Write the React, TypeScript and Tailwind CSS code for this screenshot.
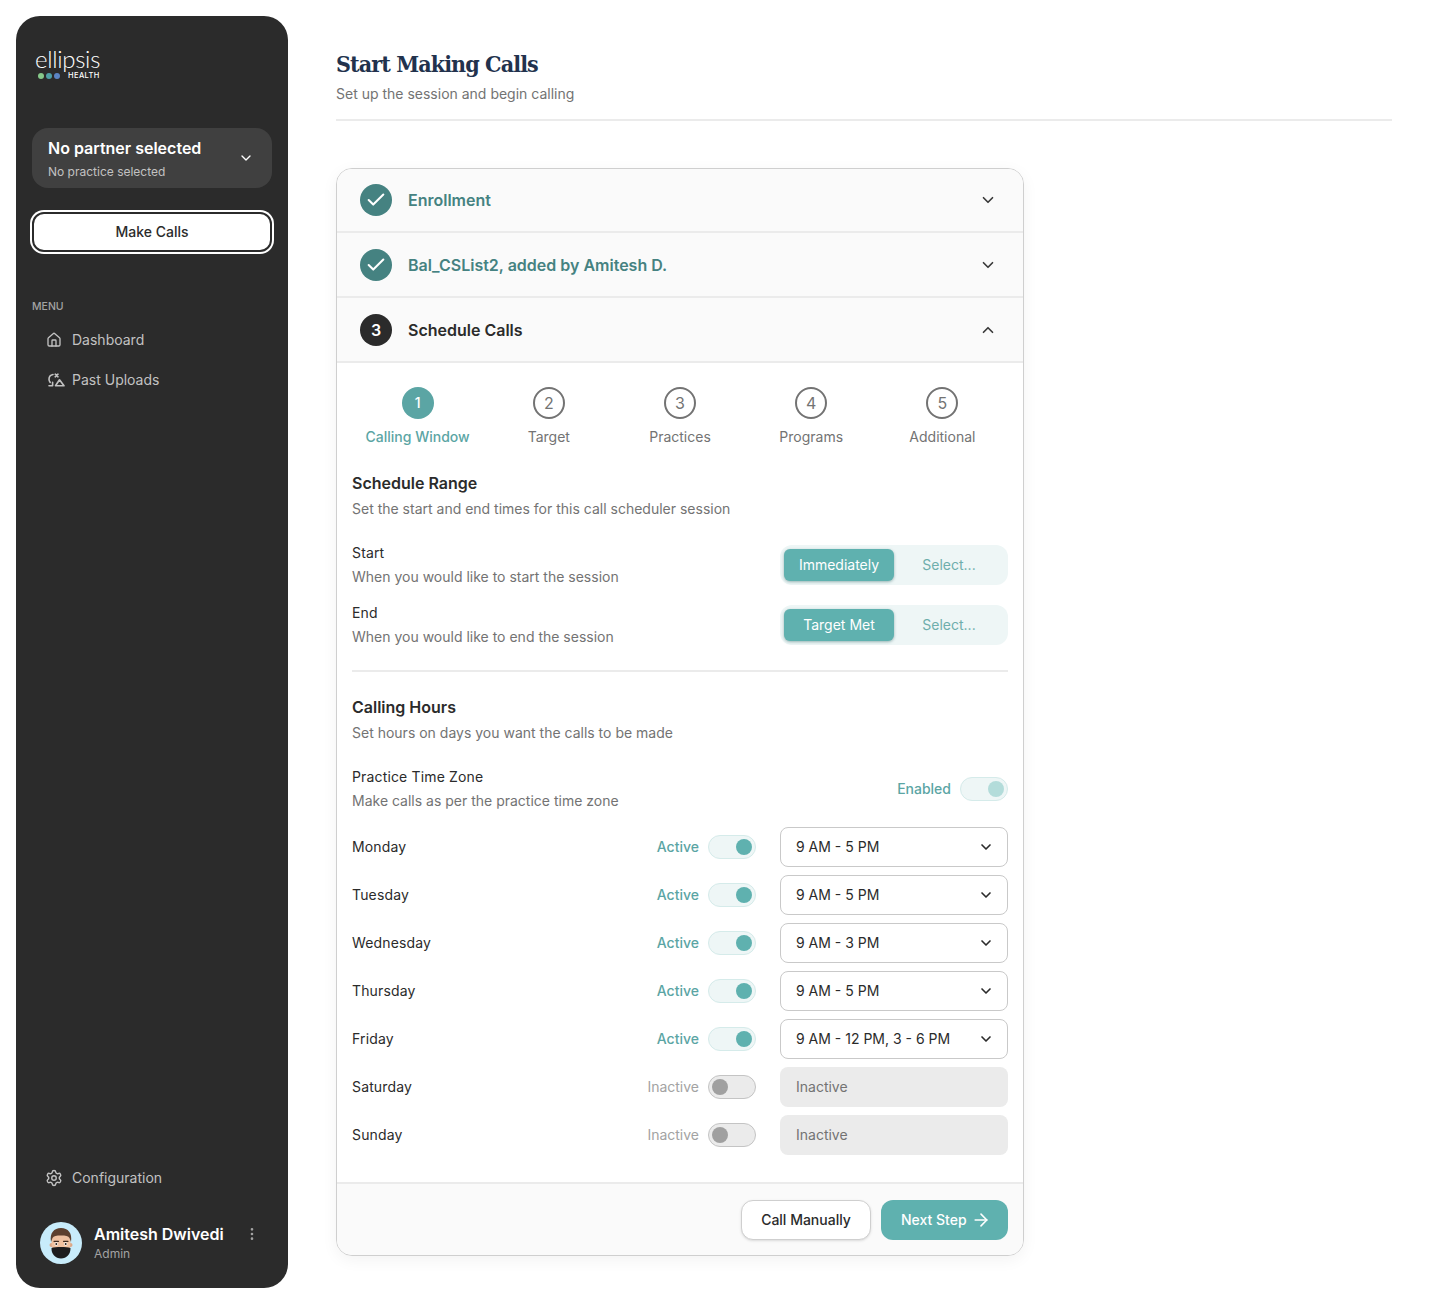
import { ArrowRight, Check, ChevronDown, ChevronUp, EllipsisVertical, Home, Settings } from "lucide-react";

const steps = ["Calling Window", "Target", "Practices", "Programs", "Additional"];

const days = [
  { day: "Monday", hours: "9 AM - 5 PM", active: true },
  { day: "Tuesday", hours: "9 AM - 5 PM", active: true },
  { day: "Wednesday", hours: "9 AM - 3 PM", active: true },
  { day: "Thursday", hours: "9 AM - 5 PM", active: true },
  { day: "Friday", hours: "9 AM - 12 PM, 3 - 6 PM", active: true },
  { day: "Saturday", hours: "Inactive", active: false },
  { day: "Sunday", hours: "Inactive", active: false },
];

function PastUploadsIcon() {
  return (
    <svg className="ml-[2px]" width="17" height="14" viewBox="0 0 17 14" fill="none" stroke="currentColor" strokeWidth="1.6" strokeLinecap="round" strokeLinejoin="round">
      <path d="M5 1.5C2.500 2 1 3.800 1 6.200c0 1.200.4 2.300 1.200 3.200" />
      <path d="M1 12.800h3.600V9.200" />
      <path d="M7.200 1.200l2.800 2.600M10 1.200L7.200 3.800" />
      <path d="M7.500 12.800l4-6 4.500 6z" />
    </svg>
  );
}

function Avatar() {
  return (
    <svg width="42" height="42" viewBox="0 0 42 42">
      <circle cx="21" cy="21" r="21" fill="#c8ecfb" />
      <circle cx="11.500" cy="23" r="2" fill="#dca888" />
      <circle cx="30.500" cy="23" r="2" fill="#dca888" />
      <ellipse cx="21" cy="21" rx="9.500" ry="13" fill="#eec0a0" />
      <path d="M11 20c-1.500-9 3-14 10-14s11.500 5 10 14l-1.500-4c-1-2-4-2.500-8.500-2.500s-7.500.5-8.500 2.500z" fill="#5c3f2e" />
      <path d="M14 19.300h4.500M23.500 19.300H28" stroke="#3d2a1f" strokeWidth="1.200" strokeLinecap="round" />
      <circle cx="16.300" cy="22" r="1.700" fill="#fff" />
      <circle cx="25.700" cy="22" r="1.700" fill="#fff" />
      <circle cx="16.300" cy="22" r="1" fill="#2a1c14" />
      <circle cx="25.700" cy="22" r="1" fill="#2a1c14" />
      <path d="M11.500 26c4-1.300 15-1.300 19 0 .3 6-4 10.500-9.500 10.500S11.200 32 11.500 26z" fill="#1c1c1e" />
    </svg>
  );
}

function Toggle({ on, soft }: { on: boolean; soft?: boolean }) {
  return (
    <div
      className={`flex h-6 w-12 items-center rounded-full border px-[3px] ${
        on ? "justify-end border-[#d5ebea] bg-[#eef6f6]" : "justify-start border-[#c4c4c4] bg-[#ebebeb]"
      }`}
    >
      <div className={`h-4 w-4 rounded-full ${on ? (soft ? "bg-[#b3dcda]" : "bg-[#5fb1af]") : "bg-[#a0a0a0]"}`} />
    </div>
  );
}

function Segmented({ value }: { value: string }) {
  return (
    <div className="flex h-10 w-[228px] items-center rounded-xl bg-[#eef6f6] pl-1">
      <div className="flex h-8 w-[110px] items-center justify-center rounded-md bg-[#5fb1af] text-sm text-white shadow-[0_1px_3px_rgba(40,100,100,0.45)]">
        {value}
      </div>
      <div className="flex-1 pr-1 text-center text-sm text-[#6eaeac]">Select...</div>
    </div>
  );
}

function AccordionRow({ title, done, open, first }: { title: string; done?: boolean; open?: boolean; first?: boolean }) {
  return (
    <div className={`flex items-center border-b-2 border-[#ebebeb] bg-[#fafafa] pl-[23px] pr-[26px] ${first ? "h-[64px]" : "h-[65px]"}`}>
      <div className={`flex h-8 w-8 items-center justify-center rounded-full text-white ${done ? "bg-[#458281]" : "bg-[#2b2b2b]"}`}>
        {done ? <Check size={22} strokeWidth={2.25} /> : <span className="text-base font-semibold">3</span>}
      </div>
      <div className={`ml-4 flex-1 text-base font-semibold ${done ? "text-[#458281]" : "text-[#2b2b2b]"}`}>{title}</div>
      {open ? <ChevronUp size={18} strokeWidth={2.25} className="text-[#3a3a3a]" /> : <ChevronDown size={18} strokeWidth={2.25} className="text-[#3a3a3a]" />}
    </div>
  );
}

function NavItem({ icon, label }: { icon: React.ReactNode; label: string }) {
  return (
    <div className="flex h-10 items-center pl-[14px] text-sm text-[#c2c2c2]">
      <div className="flex w-[26px] items-center">{icon}</div>
      {label}
    </div>
  );
}

export default function App() {
  return (
    <div className="flex h-[1304px] w-[1440px] bg-white p-4 font-['Inter',sans-serif]">
      <aside className="flex h-[1272px] w-[272px] shrink-0 flex-col rounded-3xl bg-[#2b2b2b] px-4">
        <div className="ml-[3px] mt-[33px] h-[31px] w-[70px]">
          <div className="font-['Lato',sans-serif] text-[24px] font-light leading-[20px] tracking-[-0.3px] text-white">ellipsis</div>
          <div className="mt-[3px] flex h-[8px] items-center">
            <span className="ml-[3px] h-[6px] w-[6px] rounded-full bg-[#86c98a]" />
            <span className="ml-[2px] h-[6px] w-[6px] rounded-full bg-[#4fa0a5]" />
            <span className="ml-[2px] h-[6px] w-[6px] rounded-full bg-[#5b84c4]" />
            <span className="ml-[8px] text-[7.500px] font-medium leading-[8px] tracking-[0.4px] text-white">HEALTH</span>
          </div>
        </div>
        <div className="mt-[48px] flex h-[60px] items-center justify-between rounded-2xl bg-[#404040] pl-4 pr-[18px]">
          <div className="pt-[2px]">
            <div className="text-base font-semibold leading-6 text-white">No partner selected</div>
            <div className="mt-[2px] text-xs leading-5 text-[#c2c2c2]">No practice selected</div>
          </div>
          <ChevronDown size={16} className="text-white" />
        </div>
        <button className="mt-6 h-10 rounded-xl border-2 border-[#2b2b2b] bg-white text-sm font-medium text-[#2b2b2b] ring-2 ring-white">
          Make Calls
        </button>
        <div className="mt-[47px] text-[10.500px] font-medium leading-4 text-[#a3a3a3]">MENU</div>
        <div className="mt-[5px]">
          <NavItem icon={<Home size={16} strokeWidth={2} />} label="Dashboard" />
          <NavItem icon={<PastUploadsIcon />} label="Past Uploads" />
        </div>
        <div className="mt-auto">
          <NavItem icon={<Settings size={18} strokeWidth={1.9} className="-ml-[1px]" />} label="Configuration" />
        </div>
        <div className="mb-6 mt-6 flex h-[42px] items-start pl-2">
          <Avatar />
          <div className="ml-3 flex-1">
            <div className="text-base font-semibold leading-6 text-white">Amitesh Dwivedi</div>
            <div className="text-xs leading-4 text-[#a3a3a3]">Admin</div>
          </div>
          <EllipsisVertical size={16} className="mr-3 mt-1 text-[#a3a3a3]" />
        </div>
      </aside>

      <main className="ml-12 w-[1056px]">
        <div className="border-b-2 border-[#ebebeb] pb-[15px] pt-[30px]">
          <h1 className="font-['DejaVu_Serif_Condensed','DejaVu_Serif',serif] text-[23px] font-bold leading-9 tracking-[-0.9px] text-[#22324d]">Start Making Calls</h1>
          <p className="mt-[2px] text-sm leading-5 text-[#737373]">Set up the session and begin calling</p>
        </div>

        <div className="mt-[47px] w-[688px] overflow-hidden rounded-2xl border border-[#cfcfcf] bg-white shadow-[0_4px_16px_rgba(0,0,0,0.05)]">
          <AccordionRow title="Enrollment" done first />
          <AccordionRow title="Bal_CSList2, added by Amitesh D." done />
          <AccordionRow title="Schedule Calls" open />

          <div className="px-[15px] pb-[27px]">
            <div className="mt-6 grid grid-cols-5">
              {steps.map((s, i) => (
                <div key={s} className="flex flex-col items-center">
                  <div
                    className={`flex h-8 w-8 items-center justify-center rounded-full text-base ${
                      i === 0 ? "bg-[#5ba5a4] text-sm font-medium text-white" : "border-2 border-[#737373] text-[#737373]"
                    }`}
                  >
                    {i + 1}
                  </div>
                  <div className={`mt-2 text-sm leading-5 ${i === 0 ? "font-medium text-[#5ba5a4]" : "text-[#737373]"}`}>{s}</div>
                </div>
              ))}
            </div>

            <h2 className="mt-6 text-base font-semibold leading-6 text-[#2b2b2b]">Schedule Range</h2>
            <p className="mt-[4px] text-sm leading-5 text-[#737373]">Set the start and end times for this call scheduler session</p>

            <div className="mt-6 flex items-center justify-between">
              <div>
                <div className="text-sm leading-5 tracking-[0.15px] text-[#2b2b2b]">Start</div>
                <div className="mt-1 text-sm leading-5 text-[#737373]">When you would like to start the session</div>
              </div>
              <Segmented value="Immediately" />
            </div>
            <div className="mt-4 flex items-center justify-between">
              <div>
                <div className="text-sm leading-5 tracking-[0.15px] text-[#2b2b2b]">End</div>
                <div className="mt-1 text-sm leading-5 text-[#737373]">When you would like to end the session</div>
              </div>
              <Segmented value="Target Met" />
            </div>

            <div className="mt-[23px] h-[2px] bg-[#ebebeb]" />

            <h2 className="mt-[23px] text-base font-semibold leading-6 text-[#2b2b2b]">Calling Hours</h2>
            <p className="mt-[4px] text-sm leading-5 text-[#737373]">Set hours on days you want the calls to be made</p>

            <div className="mt-6 flex items-center justify-between">
              <div>
                <div className="text-sm leading-5 tracking-[0.15px] text-[#2b2b2b]">Practice Time Zone</div>
                <div className="mt-1 text-sm leading-5 text-[#737373]">Make calls as per the practice time zone</div>
              </div>
              <div className="flex items-center gap-[9px]">
                <span className="text-sm font-medium text-[#5ba5a4]">Enabled</span>
                <Toggle on soft />
              </div>
            </div>

            <div className="mt-4 flex flex-col gap-2">
              {days.map((d) => (
                <div key={d.day} className="flex h-10 items-center">
                  <div className="flex-1 text-sm tracking-[0.15px] text-[#2b2b2b]">{d.day}</div>
                  <div className="mr-6 flex items-center gap-[9px]">
                    <span className={`text-sm ${d.active ? "font-medium text-[#5ba5a4]" : "text-[#a3a3a3]"}`}>{d.active ? "Active" : "Inactive"}</span>
                    <Toggle on={d.active} />
                  </div>
                  {d.active ? (
                    <div className="flex h-10 w-[228px] items-center justify-between rounded-lg border border-[#c9c9c9] bg-white pl-[15px] pr-[13px] text-sm text-[#2b2b2b]">
                      {d.hours}
                      <ChevronDown size={16} strokeWidth={2.5} className="text-[#2b2b2b]" />
                    </div>
                  ) : (
                    <div className="flex h-10 w-[228px] items-center rounded-lg bg-[#ebebeb] pl-4 text-sm text-[#737373]">{d.hours}</div>
                  )}
                </div>
              ))}
            </div>
          </div>

          <div className="flex h-[73px] items-center justify-end gap-[10px] border-t-2 border-[#ebebeb] bg-[#fafafa] pr-[15px]">
            <button className="h-10 w-[130px] rounded-xl border border-[#cfcfcf] bg-white text-sm font-medium text-[#2b2b2b] shadow-sm">Call Manually</button>
            <button className="flex h-10 w-[127px] items-center gap-1 rounded-xl bg-[#5fb1af] pl-5 text-sm font-medium text-white">
              Next Step
              <ArrowRight size={20} strokeWidth={1.9} />
            </button>
          </div>
        </div>
      </main>
    </div>
  );
}
